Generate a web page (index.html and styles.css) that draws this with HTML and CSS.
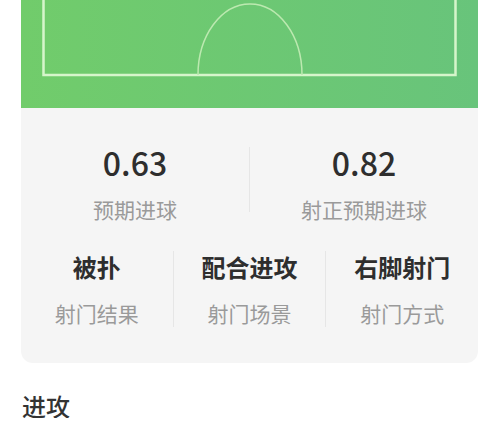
FILE: index.html
```html
<!DOCTYPE html>
<html lang="zh-CN">
<head>
    <meta charset="UTF-8">
    <meta name="viewport" content="width=device-width, initial-scale=1.0">
    <title>射门详情</title>
    <link rel="stylesheet" href="styles.css">
</head>
<body>
    <div class="card">
        <div class="pitch">
            <svg class="pitch-lines" width="457" height="108" viewBox="0 0 457 108">
                <path class="box-line" d="M22.5 0 V75 H434.5 V0" />
                <path class="arc-line" d="M177 75 A52 71 0 0 1 281 75" />
            </svg>
        </div>
        <div class="stats">
            <div class="row row-two">
                <div class="item">
                    <div class="value big">0.63</div>
                    <div class="label">预期进球</div>
                </div>
                <div class="divider short"></div>
                <div class="item">
                    <div class="value big">0.82</div>
                    <div class="label">射正预期进球</div>
                </div>
            </div>
            <div class="row row-three">
                <div class="item">
                    <div class="value">被扑</div>
                    <div class="label">射门结果</div>
                </div>
                <div class="divider"></div>
                <div class="item">
                    <div class="value">配合进攻</div>
                    <div class="label">射门场景</div>
                </div>
                <div class="divider"></div>
                <div class="item">
                    <div class="value">右脚射门</div>
                    <div class="label">射门方式</div>
                </div>
            </div>
        </div>
    </div>
    <h3 class="section-title">进攻</h3>
</body>
</html>
```

FILE: styles.css
```css
body {
    margin: 0;
    background: #ffffff;
    font-family: "Noto Sans CJK SC", "Noto Sans", sans-serif;
    color: #2b2b2b;
}
.card {
    margin: 0 22px 0 21px;
    background: #f5f5f5;
    border-radius: 0 0 12px 12px;
    overflow: hidden;
}
.pitch {
    height: 108px;
    background: linear-gradient(90deg, #71cc6b, #68c47b);
}
.pitch-lines {
    display: block;
}
.box-line {
    fill: none;
    stroke: #d6f5cb;
    stroke-width: 2.5;
}
.arc-line {
    fill: none;
    stroke: #bce9b0;
    stroke-width: 1.5;
}
.stats {
    padding: 38px 0 36px;
}
.row {
    display: grid;
    align-items: start;
}
.row-two {
    grid-template-columns: 1fr 1px 1fr;
}
.row-three {
    margin-top: 35px;
    grid-template-columns: 1fr 1px 1fr 1px 1fr;
}
.item {
    text-align: center;
}
.value {
    font-size: 24px;
    line-height: 24px;
    font-weight: 700;
    color: #2e2e2e;
}
.value.big {
    font-size: 32px;
    line-height: 32px;
    font-weight: 500;
}
.label {
    margin-top: 24px;
    font-size: 21px;
    line-height: 21px;
    color: #9a9a9a;
}
.row-two .label {
    margin-top: 21px;
}
.divider {
    background: #e6e6e6;
    height: 76px;
    margin-top: -4px;
}
.divider.short {
    height: 65px;
    margin-top: 1px;
}
.section-title {
    margin: 31px 0 0 22px;
    font-size: 24px;
    line-height: 24px;
    font-weight: 500;
    color: #333333;
}
```
